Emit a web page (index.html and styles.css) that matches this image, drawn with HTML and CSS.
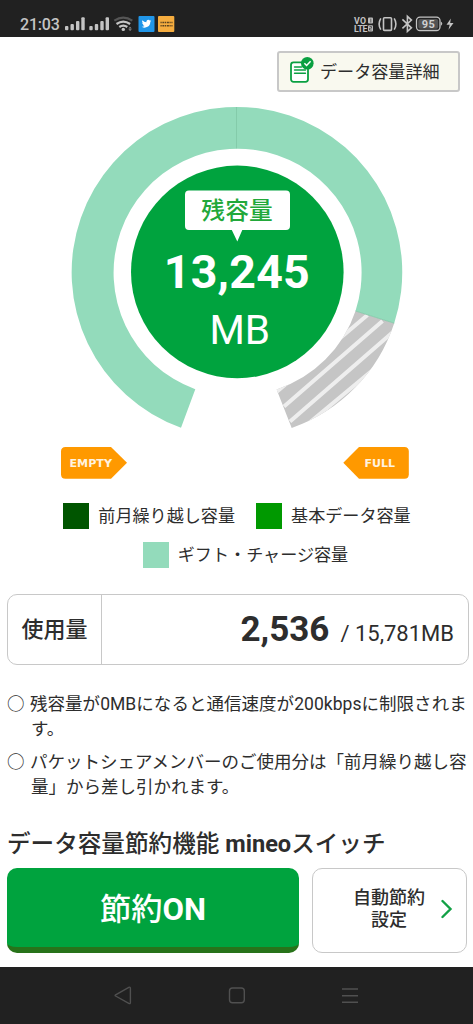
FILE: index.html
```html
<!DOCTYPE html>
<html lang="ja">
<head>
<meta charset="utf-8">
<title>mineo</title>
<link rel="stylesheet" href="styles.css">
</head>
<body>
<div class="screen">
  <header class="status">
    <span class="clock">21:03</span>
    <svg class="status-left" width="112" height="20" viewBox="64 14 112 20">
      <g fill="#c4c4c4">
        <rect x="65" y="26" width="3.400" height="4.200" rx="1"/><rect x="70.500" y="24" width="3.400" height="6.200" rx="1"/><rect x="76" y="21" width="3.400" height="9.200" rx="1"/><rect x="81.300" y="17.300" width="3.400" height="12.900" rx="1"/>
        <rect x="89.300" y="26" width="3.400" height="4.200" rx="1"/><rect x="94.800" y="24" width="3.400" height="6.200" rx="1"/><rect x="100.300" y="21" width="3.400" height="9.200" rx="1"/><rect x="105.600" y="17.300" width="3.400" height="12.900" rx="1"/>
        <circle cx="123.300" cy="29.400" r="1.700"/><path d="M128.400 28.500l1.700-1.700 1.700 1.700zM128.400 29.300l1.700 1.700 1.700-1.700z" opacity=".65"/>
      </g>
      <g fill="none" stroke-width="2.200">
        <path d="M114.300 20.600q9-6 18 0" stroke="#555"/>
        <path d="M116.500 24q6.800-4.800 13.600 0M119.300 27q4-2.900 8 0" stroke="#c4c4c4"/>
      </g>
      <rect x="138.500" y="16" width="16" height="16" rx="1" fill="#2196e8"/>
      <path transform="translate(141.700 18.900) scale(.4)" fill="#fff" d="M24 4.600a10 10 0 0 1-2.800.8 5 5 0 0 0 2.100-2.700 10 10 0 0 1-3.100 1.200 4.900 4.900 0 0 0-8.400 4.500A14 14 0 0 1 1.700 3.200a4.900 4.900 0 0 0 1.500 6.500 5 5 0 0 1-2.200-.6 4.900 4.900 0 0 0 3.900 4.900 5 5 0 0 1-2.200.1 4.900 4.900 0 0 0 4.600 3.400A10 10 0 0 1 0 19.500 14 14 0 0 0 21.500 7z"/>
      <rect x="158" y="16" width="16.300" height="16" rx="1" fill="#f6ad3f"/>
      <path d="M160.500 22.500h12M160.500 25.700h12" stroke="#5b431f" stroke-width="1.500" stroke-dasharray="1.200 .7 2 .6"/>
    </svg>
    <svg class="status-right" width="104" height="22" viewBox="352 13 104 22">
      <g class="lte"><text x="354" y="23.500" textLength="12">VO</text><text x="354" y="31.500" textLength="13.500">LTE</text></g>
      <rect x="368" y="17.500" width="5" height="6" rx="1" fill="#bdbdbd"/><rect x="368" y="25.200" width="5" height="6.300" rx="1" fill="#bdbdbd"/>
      <path d="M370.800 18.600v4M369.500 26.500h2v1.700h-2V30h2.200" fill="none" stroke="#333" stroke-width=".7"/>
      <g fill="none" stroke="#c4c4c4" stroke-width="1.600">
        <rect x="383.500" y="17.800" width="8" height="12.600" rx="1"/>
        <path d="M380.800 18.300q-3.400 5.700 0 11.400M394.200 18.300q3.400 5.700 0 11.400"/>
        <path d="M402.400 19.300l9 8.500-4 3.700V16.300l4 3.800-9 8.200"/>
        <rect x="416.500" y="17.200" width="23.500" height="13.300" rx="3.500" stroke-width="1.300"/>
      </g>
      <rect x="418.300" y="19" width="19.900" height="9.700" rx="2" fill="#535353"/>
      <path d="M440.800 21.600q3 2.200 0 4.400z" fill="#bdbdbd"/>
      <text class="battery" x="428.400" y="27.900" text-anchor="middle">95</text>
      <path d="M450.800 18.500l-4.300 6.300h3.200l-1.200 4.900 5-6.600h-3.300z" fill="#c4c4c4"/>
    </svg>
  </header>

  <main class="content">
    <div class="toolbar">
      <button class="detail-button">
        <svg width="24" height="26" viewBox="0 0 24 26">
          <rect x="1" y="5.300" width="17" height="19.500" rx="2.500" fill="#fff" stroke="#0aa041" stroke-width="1.800"/>
          <path d="M4.500 10h7M4.500 13h11M4.500 16.300h11" stroke="#0aa041" stroke-width="1.400" stroke-linecap="round"/>
          <circle cx="17.300" cy="6.300" r="6.300" fill="#0aa041"/>
          <path d="M14.400 6.300l2.200 2.200 4-4.200" fill="none" stroke="#fff" stroke-width="1.500"/>
        </svg>
        <span>データ容量詳細</span>
      </button>
    </div>

    <svg class="gauge" width="473" height="394" viewBox="0 92 473 394">
      <defs>
        <clipPath id="used-segment"><path d="M355.500 311L394.200 323.200A165.300 165.300 0 0 1 291.700 428L276.600 389.500A124 124 0 0 0 355.500 311z"/></clipPath>
      </defs>
      <path d="M181 427.800A165.300 165.300 0 1 1 394.200 323.200L355.500 311A124 124 0 1 0 195.300 389.200z" fill="#93dbbb"/>
      <g clip-path="url(#used-segment)">
        <rect x="270" y="305" width="130" height="130" fill="#c5c5c5"/>
        <path d="M276.500 392L367.500 315M284 406.500L382.500 321M290 421.500L393 332M303 428L374 369" stroke="#eee" stroke-width="4"/>
      </g>
      <path d="M236.500 107v41.300M355.500 311l38.700 12.200" stroke="#80c7a6" stroke-width=".8"/>
      <circle cx="237.300" cy="271.900" r="106.300" fill="#00a33e"/>
      <path d="M189 190.500H286q4 0 4 4V226q0 4-4 4H242.300L237.300 241.500 231.800 230H189q-4 0-4-4V194.500q0-4 4-4z" fill="#fff"/>
      <text class="gauge-label" x="201.300" y="218.800" textLength="71.500">残容量</text>
      <text class="gauge-value" x="163.800" y="288.300" textLength="146">13,245</text>
      <text class="gauge-unit" x="209.500" y="343.800">MB</text>
      <path d="M65.500 447H111L127 462.800 111 478.700H65.500q-4.500 0-4.500-4.500V451.500q0-4.500 4.500-4.500z" fill="#f90"/>
      <path d="M404.500 447H359L343.300 462.800 359 478.700H404.500q4.300 0 4.300-4.500V451.500q0-4.500-4.300-4.500z" fill="#f90"/>
      <text class="tag" x="69.500" y="467.200" textLength="42.500" lengthAdjust="spacingAndGlyphs">EMPTY</text>
      <text class="tag" x="364.500" y="467.200" textLength="30.500" lengthAdjust="spacingAndGlyphs">FULL</text>
    </svg>

    <ul class="legend">
      <li><i class="swatch carry"></i><span>前月繰り越し容量</span></li>
      <li><i class="swatch base"></i><span>基本データ容量</span></li>
      <li class="last"><i class="swatch gift"></i><span>ギフト・チャージ容量</span></li>
    </ul>

    <section class="usage">
      <div class="usage-name">使用量</div>
      <div class="usage-value"><b>2,536</b><span class="total">/ 15,781MB</span></div>
    </section>

    <ul class="notes">
      <li><span class="mark">○</span><p><span class="line kbps">残容量が0MBになると通信速度が200kbpsに制限されま</span><span class="line">す。</span></p></li>
      <li><span class="mark">○</span><p><span class="line">パケットシェアメンバーのご使用分は「前月繰り越し容</span><span class="line">量」から差し引かれます。</span></p></li>
    </ul>

    <h2 class="heading">データ容量節約機能 <b>mineo</b>スイッチ</h2>
    <div class="actions">
      <button class="save">節約<b>ON</b></button>
      <button class="auto"><span>自動節約<br>設定</span>
        <svg width="12" height="20" viewBox="0 0 12 20"><path d="M1.500 2l8 8-8 8" fill="none" stroke="#12a045" stroke-width="2.400" stroke-linecap="round"/></svg>
      </button>
    </div>
  </main>

  <nav class="navbar">
    <svg width="473" height="57" viewBox="0 967 473 57" fill="none" stroke="#505050" stroke-width="1.400">
      <path d="M115.600 994.800l13.200-7.400q1.600-.8 1.600 1v14q0 1.800-1.600 1l-13.200-7.400q-1-.6 0-1.200z"/>
      <rect x="229.500" y="988" width="14.800" height="14.800" rx="3"/>
      <path d="M342 989h16M342 995.700h16M342 1002.300h16"/>
    </svg>
  </nav>
</div>
</body>
</html>
```

FILE: styles.css
```css
* { box-sizing: border-box; }
body {
  margin: 0;
  background: #fff;
  color: #2d2d2d;
  font-family: Roboto, "Noto Sans CJK JP", sans-serif;
}
ul, p, h2 { margin: 0; padding: 0; list-style: none; }
button { margin: 0; padding: 0; font-family: inherit; color: inherit; }
svg { display: block; flex: none; }
.screen { width: 473px; height: 1024px; display: flex; flex-direction: column; overflow: hidden; }

.status {
  flex: none;
  height: 37px;
  display: flex;
  align-items: flex-start;
  padding-left: 20px;
  background: #212121;
  color: #c4c4c4;
}
.clock { width: 44px; padding-top: 15px; font-size: 16px; font-weight: 500; line-height: 19px; letter-spacing: -.2px; white-space: nowrap; }
.status-left { margin-top: 14px; }
.status-right { margin: 13px 17px 0 auto; }
.lte text { font: 700 8.8px Roboto, sans-serif; fill: #c4c4c4; }
.battery { font: 700 11px Roboto, sans-serif; letter-spacing: .4px; fill: #d0d0d0; }

.content { flex: none; height: 930px; }
.toolbar { display: flex; justify-content: flex-end; height: 55px; padding: 14px 13px 0 0; }
.detail-button {
  width: 183px;
  height: 41px;
  display: flex;
  align-items: center;
  gap: 6px;
  padding: 0 0 3px 11px;
  border: 2px solid #c8c8c8;
  border-radius: 3px;
  background: #f9f9ef;
  font-size: 17.100px;
  white-space: nowrap;
}
.gauge-label { font: 500 23.700px "Noto Sans CJK JP", sans-serif; fill: #22a83a; }
.gauge-value { font: 700 46.500px Roboto, sans-serif; fill: #fff; }
.gauge-unit { font: 400 40.500px Roboto, sans-serif; fill: #fff; }
.tag { font: 700 11px "DejaVu Sans", sans-serif; fill: #fff3e0; }

.legend {
  height: 108px;
  padding: 17px 20px 0 21px;
  display: flex;
  flex-wrap: wrap;
  justify-content: center;
  align-content: flex-start;
  gap: 13px 21px;
  font-size: 17.100px;
}
.legend li { height: 26px; display: flex; align-items: center; gap: 9px; white-space: nowrap; }
.legend span { padding-bottom: 3px; }
.legend .last { padding-left: 17px; }
.swatch { width: 26px; height: 26px; }
.carry { background: #050; }
.base { background: #090; }
.gift { background: #93dbbb; }

.usage {
  height: 71px;
  margin: 0 4px 0 7px;
  display: flex;
  border: 1px solid #c8c8c8;
  border-radius: 10px;
}
.usage-name {
  width: 94px;
  display: flex;
  align-items: center;
  justify-content: center;
  padding-bottom: 6px;
  border-right: 1px solid #c8c8c8;
  font-size: 22px;
  font-weight: 500;
}
.usage-value { flex: 1; display: flex; justify-content: flex-end; align-items: baseline; padding: 14px 14px 0 0; white-space: nowrap; }
.usage-value b { font-size: 35px; line-height: 41px; }
.total { margin-left: 11px; font-size: 22px; }

.notes { height: 153px; padding: 27px 0 0 7px; font-size: 17.500px; line-height: 25px; }
.notes li { display: flex; margin-bottom: 8px; }
.mark { width: 23px; }
.line { display: block; white-space: nowrap; }
.line + .line { padding-left: 1px; }
.kbps { letter-spacing: .04px; }

.heading { height: 50px; padding: 8px 0 0 7px; font-size: 23.600px; line-height: 37px; font-weight: 500; white-space: nowrap; }
.actions { display: flex; gap: 13px; padding-left: 7px; height: 85px; }
.save {
  width: 292px;
  height: 85px;
  padding-bottom: 2px;
  border: 0;
  border-bottom: 6px solid #28731a;
  border-radius: 10px;
  background: #00a33e;
  color: #fff;
  font-size: 31.200px;
  font-weight: 500;
}
.auto {
  width: 155px;
  height: 85px;
  display: flex;
  align-items: center;
  gap: 16px;
  padding: 0 0 3px 40px;
  border: 1px solid #c8c8c8;
  border-radius: 10px;
  background: #fff;
  font-size: 18px;
  line-height: 22px;
  font-weight: 500;
}
.navbar { flex: none; height: 57px; background: #212121; }
```
